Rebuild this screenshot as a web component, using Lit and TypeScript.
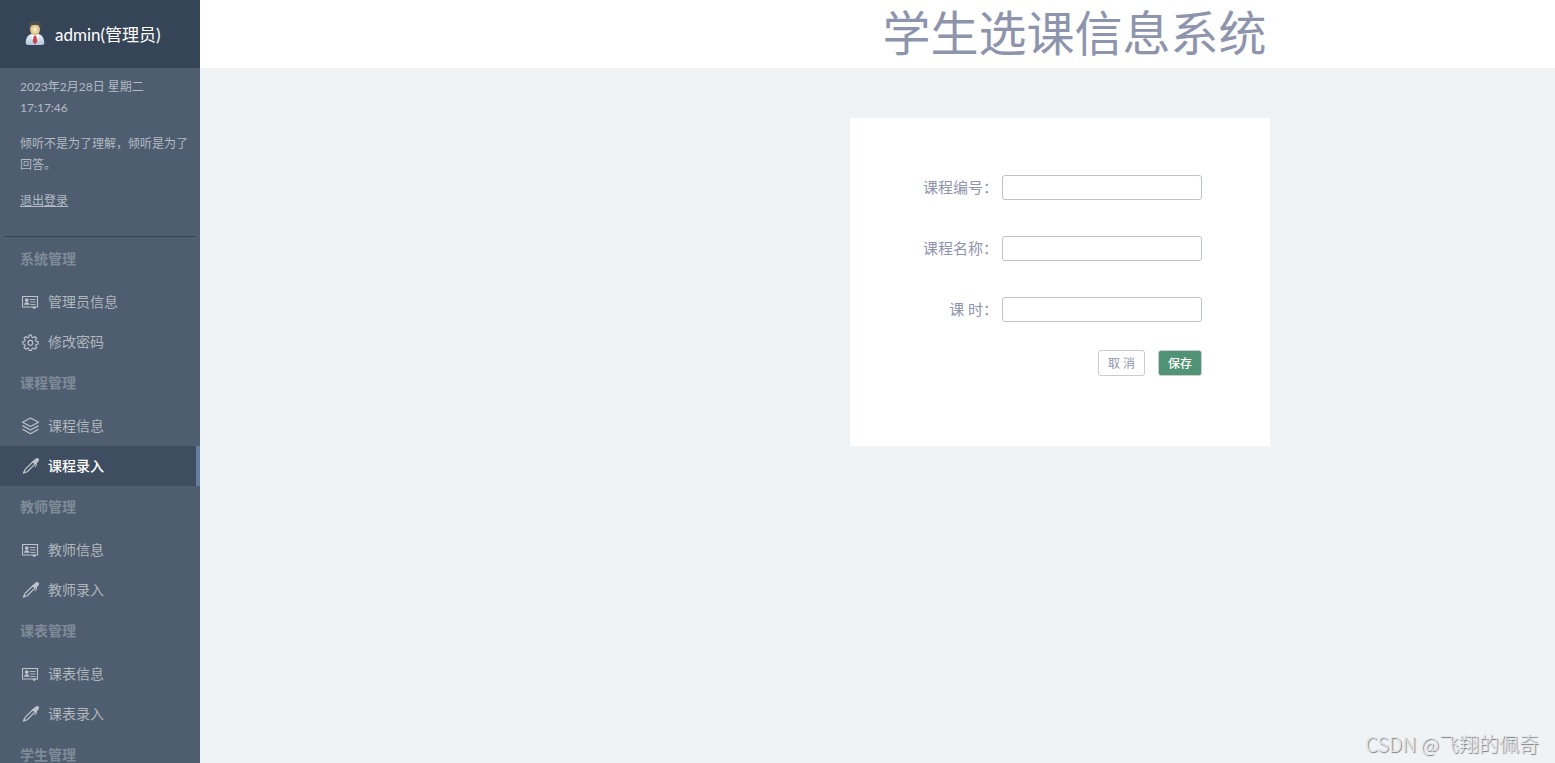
import { LitElement, html, css, svg } from "lit";
import { customElement, property, state } from "lit/decorators.js";

type IconName = "card" | "gear" | "layers" | "pen";

interface MenuGroup {
  title: string;
  items: { icon: IconName; label: string }[];
}

const groups: MenuGroup[] = [
  { title: "系统管理", items: [{ icon: "card", label: "管理员信息" }, { icon: "gear", label: "修改密码" }] },
  { title: "课程管理", items: [{ icon: "layers", label: "课程信息" }, { icon: "pen", label: "课程录入" }] },
  { title: "教师管理", items: [{ icon: "card", label: "教师信息" }, { icon: "pen", label: "教师录入" }] },
  { title: "课表管理", items: [{ icon: "card", label: "课表信息" }, { icon: "pen", label: "课表录入" }] },
  { title: "学生管理", items: [] },
];

const glyphs = {
  card: svg`
    <path d="M.5 3.500h15v10.500h-15z" fill="none" stroke="currentColor" stroke-width="1.1"/>
    <circle cx="4.700" cy="7.100" r="1.900" fill="currentColor"/>
    <path d="M2 11.800c0-1.800 1-2.600 2.700-2.600s2.800.8 2.800 2.600z" fill="currentColor"/>
    <path d="M7.500 6.500h6M8.200 9h5.300M8.500 11.500h5" stroke="currentColor" stroke-width=".9"/>
    <path d="M10 13.800h4.400l-2.200 2.700z" fill="currentColor"/>`,
  gear: svg`
    <g transform="translate(.7 1.400) scale(.9)">
    <path d="M7.200.8h2.600l.5 2.300 1.400.6 2-1.300 1.800 1.800-1.300 2 .6 1.400 2.300.5v2.600l-2.300.5-.6 1.400 1.300 2-1.800 1.800-2-1.300-1.400.6-.5 2.300H7.200l-.5-2.300-1.400-.6-2 1.300-1.800-1.800 1.300-2-.6-1.400-2-.5V8.100l2-.5.6-1.400-1.300-2 1.800-1.800 2 1.300 1.400-.6z" fill="none" stroke="currentColor" stroke-width="1.300" stroke-linejoin="round"/>
    <circle cx="8.500" cy="9.400" r="2.700" fill="none" stroke="currentColor" stroke-width="1.300"/>
    </g>`,
  layers: svg`
    <path d="M8.500 1l8 4.200-8 4.300-8-4.300zM.5 8.600l8 4.400 8-4.400M.5 12.200l8 4.500 8-4.500" fill="none" stroke="currentColor" stroke-width="1.200" stroke-linejoin="round"/>`,
  pen: svg`
    <path d="M1.600 16l1.500-3.600 7.800-7.700 2.200 2.200-7.900 7.800z" fill="none" stroke="currentColor" stroke-width="1.200" stroke-linejoin="round"/>
    <path d="M.8 16.800l1.300-3.200 2 1.900zM10.300 4.600l2.800-2.700c1.200-1.100 2.500-1.200 3.400-.4.900.9.800 2.200-.3 3.300l-1.300 1.300v2.400l-2 1.900-.5-.6 1.500-1.600V7l-.9.600z" fill="currentColor"/>`,
};

@customElement("menu-icon")
export class MenuIcon extends LitElement {
  @property() name: IconName = "card";

  static styles = css`
    :host { display: block; width: 18px; height: 18px; }
    .glyph { display: block; }
  `;

  render() {
    return html`<svg class="glyph" width="18" height="18" viewBox="0 0 18 18" aria-hidden="true">${glyphs[this.name]}</svg>`;
  }
}

@customElement("side-menu")
export class SideMenu extends LitElement {
  @state() private active = "课程录入";

  static styles = css`
    :host { display: block; overflow: hidden; background: #4e5e70; color: #b3bac4; }
    .user { display: flex; align-items: center; gap: 7px; height: 68px; padding: 0 0 2px 22px; box-sizing: border-box; background: #364457; color: #fff; font-size: 17px; }
    .avatar { display: block; }
    .info { padding: 8px 10px 25px 20px; font-size: 12px; line-height: 21px; }
    .line { margin: 0 0 15px; }
    .logout { color: inherit; }
    .rule { height: 1px; margin: 0 5px; border: 0; background: #364457; }
    .menu { padding-top: 1px; }
    .title { margin: 0; padding: 0 0 2px 20px; font-size: 14px; line-height: 42px; font-weight: bold; color: #7f8b98; }
    .list { margin: 0; padding: 0; list-style: none; }
    .item { display: flex; align-items: center; gap: 8px; height: 40px; padding-left: 22px; border-right: 4px solid transparent; box-sizing: border-box; font-size: 14px; color: #b0b6bc; text-decoration: none; }
    .item.active { background: #3e4d5f; border-color: #627d9f; color: #fff; font-weight: 500; }
    .text { padding-bottom: 2px; }
    .icon { color: #bcc3ca; }
  `;

  render() {
    return html`
      <div class="user">
        <svg class="avatar" width="26" height="28" viewBox="0 0 26 28" aria-hidden="true">
          <defs>
            <linearGradient id="coat" x2="0" y2="1"><stop stop-color="#e7f3fb"/><stop offset="1" stop-color="#b3c8db"/></linearGradient>
            <radialGradient id="face"><stop stop-color="#fff3c8"/><stop offset="1" stop-color="#d6b47f"/></radialGradient>
          </defs>
          <path d="M3.700 24c0-6 3-8.500 6-9h6.600c3 .5 6 3 6 9 0 1.500-1.500 2-3 2H6.700c-1.500 0-3-.5-3-2z" fill="url(#coat)"/>
          <path d="M10 15l3 3 3-3 1 2-4 8-4-8z" fill="#fff"/>
          <path d="M11.800 17h2.400l1.200 5.500-2.400 3-2.400-3z" fill="#c84450"/>
          <ellipse cx="13" cy="10.500" rx="5" ry="6" fill="url(#face)"/>
          <path d="M7.300 10C6.300 4.500 7.500 2 13 2s6.700 2.500 5.700 8l-1-3.200c-2-1.200-7.400-1.200-9.400 0z" fill="#4d4f4f"/>
        </svg>
        <span>admin(管理员)</span>
      </div>
      <div class="info">
        <p class="line">2023年2月28日 星期二<br />17:17:46</p>
        <p class="line">倾听不是为了理解，倾听是为了回答。</p>
        <a class="logout" href="#">退出登录</a>
      </div>
      <hr class="rule" />
      <nav class="menu">
        ${groups.map(
          (g) => html`
            <h2 class="title">${g.title}</h2>
            <ul class="list">
              ${g.items.map(
                (i) => html`<li>
                  <a class="item ${i.label === this.active ? "active" : ""}" href="#"
                    @click=${(e: Event) => { e.preventDefault(); this.active = i.label; }}>
                    <menu-icon class="icon" name=${i.icon}></menu-icon><span class="text">${i.label}</span>
                  </a>
                </li>`
              )}
            </ul>`
        )}
      </nav>
    `;
  }
}

@customElement("course-form")
export class CourseForm extends LitElement {
  static styles = css`
    :host { display: block; width: 420px; background: #fff; color: #8f94ad; }
    .form { display: grid; gap: 28px; padding: 57px 68px 70px 0; }
    .fields { display: grid; gap: 36px; }
    .field { display: flex; justify-content: flex-end; align-items: center; gap: 4px; }
    .label { padding-bottom: 2px; font-size: 15px; line-height: 20px; }
    .input { width: 200px; height: 25px; box-sizing: border-box; padding: 2px 6px; border: 1px solid #bfc2c8; border-radius: 3px; background: #fff; font: inherit; font-size: 14px; color: inherit; }
    .actions { display: flex; justify-content: flex-end; gap: 13px; }
    .button { height: 26px; padding: 0 9px 2px; border: 1px solid #ccc; border-radius: 3px; box-sizing: border-box; background: #fff; font-family: inherit; font-size: 12px; color: #8f94ad; }
    .save { background: #519475; color: #fff; font-weight: 500; }
  `;

  render() {
    return html`
      <form class="form" @submit=${(e: Event) => e.preventDefault()}>
        <div class="fields">
          <div class="field"><label class="label" for="no">课程编号：</label><input class="input" id="no" type="text" /></div>
          <div class="field"><label class="label" for="name">课程名称：</label><input class="input" id="name" type="text" /></div>
          <div class="field"><label class="label" for="hours">课 时：</label><input class="input" id="hours" type="text" /></div>
        </div>
        <div class="actions">
          <button class="button" type="reset">取 消</button>
          <button class="button save" type="submit">保存</button>
        </div>
      </form>
    `;
  }
}

@customElement("app-root")
export class AppRoot extends LitElement {
  static styles = css`
    :host { display: grid; grid-template-columns: 200px 1fr; height: 100vh; overflow: hidden; background: #eff3f6; font-family: Lato, "Noto Sans CJK SC", sans-serif; }
    .page { min-width: 0; }
    .header { height: 68px; padding-left: 394px; background: #fff; text-align: center; }
    .heading { margin: 0; font-size: 48px; line-height: 66px; font-weight: normal; color: #8f94ad; }
    .content { display: flex; justify-content: center; padding: 50px 0 0 365px; }
    .mark { position: absolute; right: 16px; bottom: 6px; font-family: "Noto Sans CJK SC", sans-serif; font-weight: 300; font-size: 20px; line-height: 26px; color: #e4e7ea; text-shadow: 1px 1px 1px #777; }
  `;

  render() {
    return html`
      <side-menu></side-menu>
      <div class="page">
        <header class="header"><h1 class="heading">学生选课信息系统</h1></header>
        <main class="content"><course-form></course-form></main>
      </div>
      <div class="mark">CSDN @飞翔的佩奇</div>
    `;
  }
}
